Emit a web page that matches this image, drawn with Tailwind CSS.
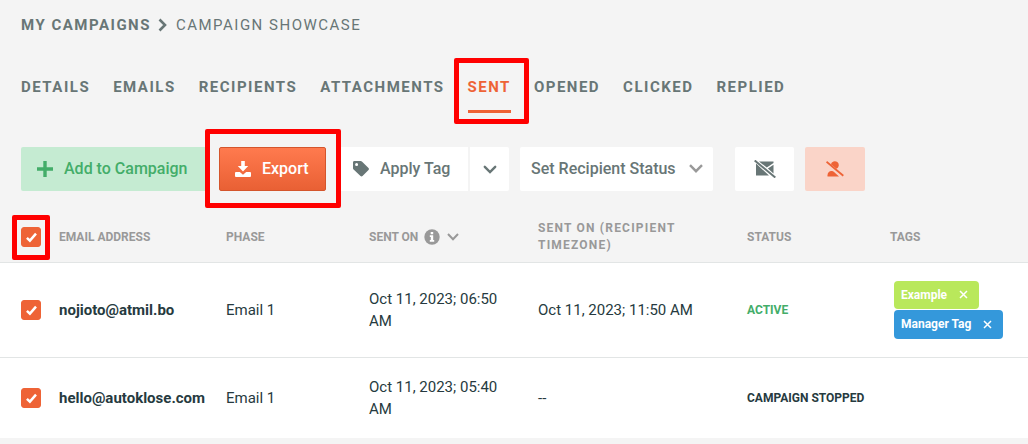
<!DOCTYPE html>
<html lang="en">
<head>
    <meta charset="UTF-8">
    <meta name="viewport" content="width=device-width, initial-scale=1.0">
    <title>Campaign Showcase - Sent</title>
    <script src="https://cdn.jsdelivr.net/npm/@tailwindcss/browser@4"></script>
</head>
<body class="bg-[#f4f4f4] font-['Roboto',sans-serif] text-[15px] leading-[22px] text-[#263a40]">
    <header class="px-[21px] pt-[14px]">
        <div class="flex items-center tracking-widest text-[#687676]">
            <a href="#" class="font-bold">MY CAMPAIGNS</a>
            <svg class="ml-[7px] mr-2 w-[10px] h-[14px]" viewBox="0 0 10 14" fill="none" stroke="currentColor" stroke-width="2.600"><path d="M1.500 1.500L7 7L1.500 12.500"/></svg>
            <span>CAMPAIGN SHOWCASE</span>
        </div>

        <nav class="mt-10 flex gap-[23px] font-bold tracking-widest text-[#687676]">
            <a href="#" class="border-b-3 border-transparent pb-3">DETAILS</a>
            <a href="#" class="border-b-3 border-transparent pb-3">EMAILS</a>
            <a href="#" class="border-b-3 border-transparent pb-3">RECIPIENTS</a>
            <a href="#" class="border-b-3 border-transparent pb-3">ATTACHMENTS</a>
            <a href="#" class="relative border-b-3 border-[#ee6336] pb-3 text-[#ee6336]">
                SENT
                <span class="pointer-events-none absolute -left-[14px] -right-[18px] -top-[18px] -bottom-[14px] rounded-xs border-5 border-[#ff0000]"></span>
            </a>
            <a href="#" class="border-b-3 border-transparent pb-3">OPENED</a>
            <a href="#" class="border-b-3 border-transparent pb-3">CLICKED</a>
            <a href="#" class="border-b-3 border-transparent pb-3">REPLIED</a>
        </nav>
    </header>

    <!-- Toolbar -->
    <div class="mt-[34px] flex gap-[11px] px-[21px] text-base font-medium text-[#687676]">
        <button type="button" class="flex h-11 w-[187px] items-center gap-[11px] rounded-xs bg-[#c5ebd2] px-4 text-[#43ad69]">
            <svg class="size-4" viewBox="0 0 16 16" fill="currentColor"><path d="M6.300 0h3.400v6.300H16v3.400H9.700V16H6.300V9.700H0V6.300h6.300z"/></svg>
            Add to Campaign
        </button>
        <button type="button" class="relative flex h-11 w-[107px] items-center gap-[11px] rounded-xs border border-[#d4552c] bg-linear-to-b from-[#ff7a4e] to-[#e96034] px-[15px] text-white">
            <svg class="size-4" viewBox="0 0 16 16" fill="currentColor"><path d="M6.200 0h3.600v5h3.400L8 10.400 2.800 5h3.400z"/><path d="M1 11h3.800L8 13.800 11.200 11H15a1 1 0 0 1 1 1v3a1 1 0 0 1-1 1H1a1 1 0 0 1-1-1v-3a1 1 0 0 1 1-1z"/></svg>
            Export
            <span class="pointer-events-none absolute -left-[15px] -right-[16px] -top-[19px] -bottom-[18px] rounded-xs border-5 border-[#ff0000]"></span>
        </button>
        <div class="flex gap-0.5">
            <button type="button" class="flex h-11 w-[131px] items-center gap-[11px] rounded-l-xs bg-white px-4">
                <svg class="size-4" viewBox="0 0 16 16" fill="currentColor"><path fill-rule="evenodd" d="M1.400 0h6.200c.5 0 1 .2 1.300.5l6.600 6.600c.6.6.6 1.300 0 1.900l-6 6c-.6.6-1.400.6-2 0L.6 8.600C.2 8.200 0 7.800 0 7.300V1.400C0 .6.6 0 1.400 0zM3.600 2.100a1.500 1.500 0 1 0 0 3 1.500 1.500 0 0 0 0-3z"/></svg>
                Apply Tag
            </button>
            <button type="button" aria-label="More tag actions" class="flex h-11 w-[39px] items-center justify-center rounded-r-xs bg-white">
                <svg class="w-[14px] h-[9px]" viewBox="0 0 14 9" fill="none" stroke="currentColor" stroke-width="2.400" stroke-linecap="round"><path d="M1.800 1.800L7 7L12.200 1.800"/></svg>
            </button>
        </div>
        <div class="relative">
            <select aria-label="Set Recipient Status" class="h-11 w-[193px] appearance-none rounded-xs bg-white pl-[11px] font-medium outline-none">
                <option>Set Recipient Status</option>
            </select>
            <svg class="pointer-events-none absolute right-[10px] top-[17px] w-[14px] h-[9px] text-[#999]" viewBox="0 0 14 9" fill="none" stroke="currentColor" stroke-width="2.400"><path d="M1 1.200L7 7.200L13 1.200"/></svg>
        </div>
        <button type="button" aria-label="Unsubscribe" class="ml-[11px] flex h-11 w-[59px] items-center justify-center rounded-xs bg-white">
            <svg class="w-[22px] h-[18px]" viewBox="0 0 22 18" fill="currentColor"><path d="M5 1.500h14.500v1.600L12.800 7.600zM2 3.600l13 11.900H2zM13.900 8.600l5.600-3.900v8.700z"/><path d="M.7.500L21.300 17.500" stroke="currentColor" stroke-width="2"/></svg>
        </button>
        <button type="button" aria-label="Remove recipient" class="flex h-11 w-[60px] items-center justify-center rounded-xs bg-[#fad4c8] text-[#ee6336]">
            <svg class="w-[18px] h-[16px]" viewBox="0 0 18 16" fill="currentColor"><path d="M4.900 3.200A4 4 0 1 1 10.500 7.800z"/><path d="M1.500 15.500v-1.200c0-2.600 1.700-4.400 4-4.400 1.100 0 1.700.4 2.300.9l5.200 4.700z"/><path d="M.5.800L17.300 14.800" stroke="currentColor" stroke-width="1.800"/></svg>
        </button>
    </div>

    <!-- Recipients -->
    <table class="mt-[22px] w-full table-fixed text-left">
        <colgroup>
            <col class="w-[59px]">
            <col class="w-[167px]">
            <col class="w-[143px]">
            <col class="w-[169px]">
            <col class="w-[209px]">
            <col class="w-[143px]">
            <col>
        </colgroup>
        <thead class="text-xs text-[#999]">
            <tr class="h-[49px] border-b border-[#e2e5e5]">
                <th class="pl-[21px]">
                    <label class="relative block size-5">
                        <input type="checkbox" checked aria-label="Select all" class="peer block size-5 appearance-none rounded-[3px] border border-[#ee6336] checked:bg-[#ee6336]">
                        <svg class="pointer-events-none absolute left-[5px] top-[5px] hidden size-[11px] peer-checked:block" viewBox="0 0 11 11" fill="none" stroke="#fff" stroke-width="2.500"><path d="M.9 5.800L3.900 8.600L10 1.700"/></svg>
                        <span class="pointer-events-none absolute -left-[9px] -right-[9px] -top-[12px] -bottom-[13px] rounded-xs border-5 border-[#ff0000]"></span>
                    </label>
                </th>
                <th>EMAIL ADDRESS</th>
                <th>PHASE</th>
                <th>
                    <button type="button" class="flex items-center font-bold">
                        SENT ON
                        <svg class="ml-1.5 size-4" viewBox="0 0 16 16"><circle cx="8" cy="8" r="7.700" fill="#999"/><path fill="#fff" d="M6.700 2.900h2.500v2.300H6.700zM5.800 6.300h3.400v4.800h1v1.600H5.800v-1.600h1V7.900h-1z"/></svg>
                        <svg class="ml-[7px] w-[12px] h-[8px]" viewBox="0 0 12 8" fill="none" stroke="#999" stroke-width="2"><path d="M1 1L6 6.200L11 1"/></svg>
                    </button>
                </th>
                <th class="pr-5 leading-[17px] tracking-widest">SENT ON (RECIPIENT TIMEZONE)</th>
                <th>STATUS</th>
                <th>TAGS</th>
            </tr>
        </thead>
        <tbody class="bg-white">
            <tr class="border-b border-[#e2e5e5]">
                <td class="pl-[21px]">
                    <label class="relative block size-5">
                        <input type="checkbox" checked aria-label="Select nojioto@atmil.bo" class="peer block size-5 appearance-none rounded-[3px] border border-[#ee6336] checked:bg-[#ee6336]">
                        <svg class="pointer-events-none absolute left-[5px] top-[5px] hidden size-[11px] peer-checked:block" viewBox="0 0 11 11" fill="none" stroke="#fff" stroke-width="2.500"><path d="M.9 5.800L3.900 8.600L10 1.700"/></svg>
                    </label>
                </td>
                <td class="font-bold">nojioto@atmil.bo</td>
                <td>Email 1</td>
                <td class="py-[18px] pr-7">Oct 11, 2023; 06:50 AM</td>
                <td>Oct 11, 2023; 11:50 AM</td>
                <td class="text-xs font-bold text-[#43ad69]">ACTIVE</td>
                <td class="py-[18px] pl-1">
                    <div class="flex flex-col items-start gap-px text-xs font-bold text-white">
                        <span class="flex h-7 items-center gap-3 rounded-sm bg-[#b9e85b] pl-[7px] pr-[11px]">
                            Example
                            <button type="button" aria-label="Remove Example">
                                <svg class="size-[9px]" viewBox="0 0 9 9" fill="none" stroke="currentColor" stroke-width="1.500"><path d="M1 1l7 7M8 1L1 8"/></svg>
                            </button>
                        </span>
                        <span class="flex h-[29px] items-center gap-3 rounded-sm bg-[#3498db] pl-[7px] pr-[11px]">
                            Manager Tag
                            <button type="button" aria-label="Remove Manager Tag">
                                <svg class="size-[9px]" viewBox="0 0 9 9" fill="none" stroke="currentColor" stroke-width="1.500"><path d="M1 1l7 7M8 1L1 8"/></svg>
                            </button>
                        </span>
                    </div>
                </td>
            </tr>
            <tr>
                <td class="pl-[21px]">
                    <label class="relative block size-5">
                        <input type="checkbox" checked aria-label="Select hello@autoklose.com" class="peer block size-5 appearance-none rounded-[3px] border border-[#ee6336] checked:bg-[#ee6336]">
                        <svg class="pointer-events-none absolute left-[5px] top-[5px] hidden size-[11px] peer-checked:block" viewBox="0 0 11 11" fill="none" stroke="#fff" stroke-width="2.500"><path d="M.9 5.800L3.900 8.600L10 1.700"/></svg>
                    </label>
                </td>
                <td class="font-bold">hello@autoklose.com</td>
                <td>Email 1</td>
                <td class="py-[18px] pr-7">Oct 11, 2023; 05:40 AM</td>
                <td>--</td>
                <td class="text-xs font-bold">CAMPAIGN STOPPED</td>
                <td></td>
            </tr>
        </tbody>
    </table>
</body>
</html>
